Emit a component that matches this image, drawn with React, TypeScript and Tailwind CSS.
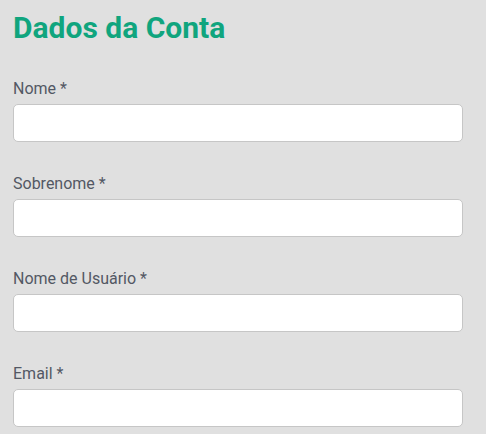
import React from 'react';

const fields = ['Nome *', 'Sobrenome *', 'Nome de Usuário *', 'Email *'];

export default function App() {
  return (
    <div className="min-h-[434px] bg-[#e0e0e0] px-[13px] pt-[8px] font-['Roboto',sans-serif]">
      <h1 className="text-[30px] font-bold leading-[40px] text-[#10a57e]">Dados da Conta</h1>
      <form className="mt-[29px] flex w-[450px] flex-col gap-[30px]">
        {fields.map((label) => (
          <div key={label} className="flex flex-col">
            <label className="mb-[3px] text-[16px] leading-[24px] text-[#535864]">{label}</label>
            <input
              type="text"
              className="h-[38px] w-full rounded-[5px] border border-[#c6c6c6] bg-white px-3 outline-none"
            />
          </div>
        ))}
      </form>
    </div>
  );
}
